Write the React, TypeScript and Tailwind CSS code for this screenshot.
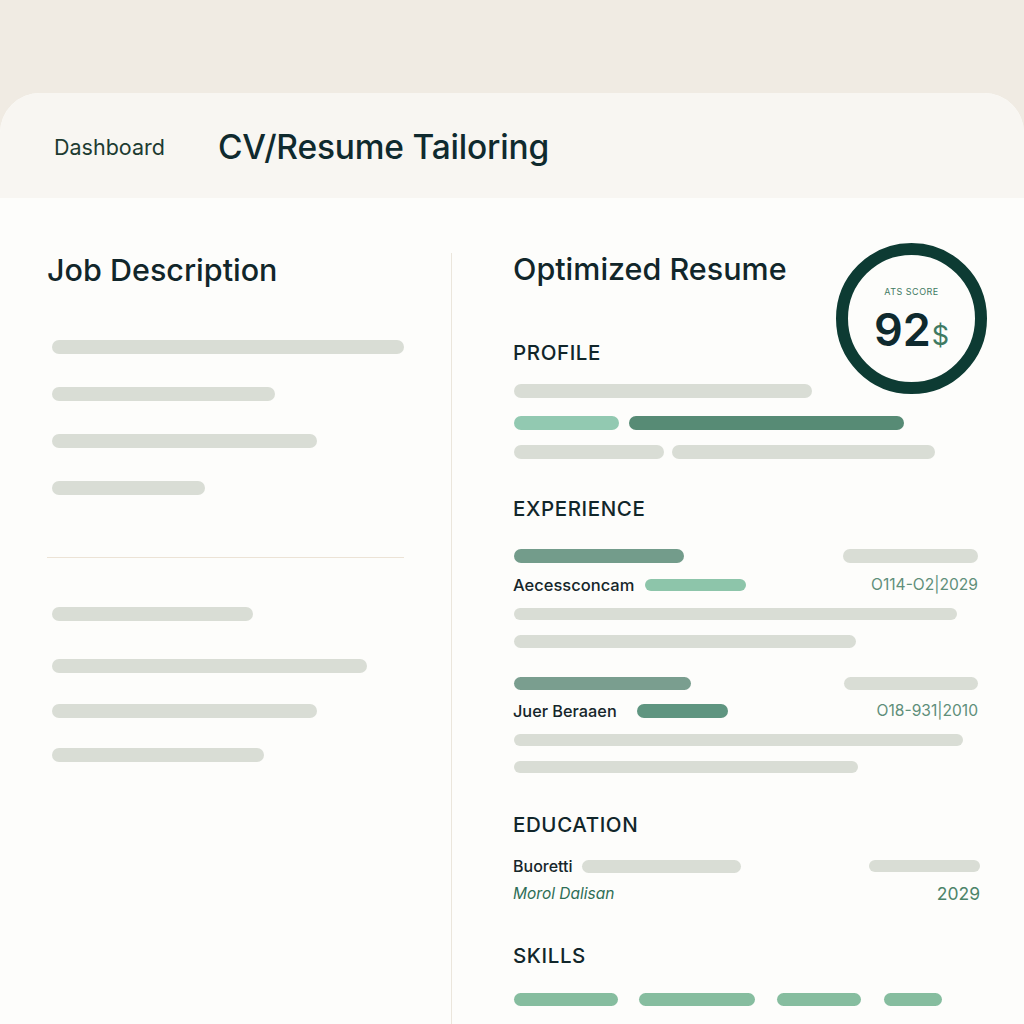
import React from 'react';

const gray = 'bg-[#d9ddd5]';

function Bar({ w, color = gray, className = '' }: { w: string; color?: string; className?: string }) {
  return <div className={`h-[14px] rounded-full ${color} ${w} ${className}`} />;
}

export default function App() {
  return (
    <div className="min-h-[1024px] w-[1024px] overflow-hidden bg-[#f0ebe3] pt-[93px] font-['Inter',sans-serif]">
      <div className="rounded-t-[40px] bg-[#fdfdfb] h-[931px] overflow-hidden">
        {/* Header */}
        <div className="h-[105px] bg-[#f8f6f2] flex items-center pl-[54px] pt-[4px]">
          <span className="text-[21.5px] text-[#1d3b31]">Dashboard</span>
          <span className="ml-[53px] text-[33.5px] font-medium text-[#0f2a2e] tracking-[-0.2px]">CV/Resume Tailoring</span>
        </div>

        <div className="flex">
          {/* Left column */}
          <div className="w-[451px] pl-[47px] pr-[46px] pt-[54px]">
            <h2 className="text-[30.5px] leading-[36px] font-medium text-[#11262a]">Job Description</h2>
            <div className="pl-[5px] mt-[52px] flex flex-col gap-[33px]">
              <Bar w="w-[352px]" />
              <Bar w="w-[223px]" />
              <Bar w="w-[265px]" />
              <Bar w="w-[153px]" />
            </div>
            <div className="mt-[62px] h-px bg-[#ece3d6] w-[357px]" />
            <div className="pl-[5px] mt-[49px] flex flex-col">
              <Bar w="w-[201px]" />
              <Bar w="w-[315px]" className="mt-[38px]" />
              <Bar w="w-[265px]" className="mt-[31px]" />
              <Bar w="w-[212px]" className="mt-[30px]" />
            </div>
          </div>

          {/* Divider */}
          <div className="w-px bg-[#ebe6dc] mt-[55px] h-[780px]" />

          {/* Right column */}
          <div className="relative flex-1 pl-[62px] pr-[44px] pt-[53px]">
            <h2 className="text-[30.5px] leading-[36px] font-medium text-[#11262a] ml-[-1px]">Optimized Resume</h2>

            {/* Score ring */}
            <div className="absolute left-[384px] top-[45px] w-[151px] h-[151px] rounded-full border-[12px] border-[#0d3b33] bg-[#fdfdfb] flex flex-col items-center justify-center">
              <span className="text-[9px] leading-[10px] tracking-[0.5px] text-[#3f7a62] mt-[2px]">ATS SCORE</span>
              <div className="flex items-end mt-[10px]">
                <span className="text-[45px] leading-[45px] font-semibold text-[#0f2a2e]">92</span>
                <span className="text-[27px] leading-[32px] text-[#3f7a62] ml-[1px]">$</span>
              </div>
            </div>

            {/* Profile */}
            <h3 className="mt-[54px] text-[20.5px] leading-[24px] font-medium tracking-[0.6px] text-[#11262a] ml-[-1px]">PROFILE</h3>
            <Bar w="w-[298px]" className="mt-[19px]" />
            <div className="flex gap-[10px] mt-[18px]">
              <Bar w="w-[105px]" color="bg-[#92c9b1]" />
              <Bar w="w-[275px]" color="bg-[#578b75]" />
            </div>
            <div className="flex gap-[8px] mt-[15px]">
              <Bar w="w-[150px]" />
              <Bar w="w-[263px]" />
            </div>

            {/* Experience */}
            <h3 className="mt-[38px] text-[20.5px] leading-[24px] font-medium tracking-[0.6px] text-[#11262a] ml-[-1px]">EXPERIENCE</h3>
            <div className="flex justify-between mt-[28px] pr-[2px]">
              <Bar w="w-[170px]" color="bg-[#739c8b]" />
              <Bar w="w-[135px]" />
            </div>
            <div className="flex items-center mt-[12px] h-[20px]">
              <span className="text-[16.5px] font-medium text-[#16262a] ml-[-1px]">Aecessconcam</span>
              <Bar w="w-[101px]" color="bg-[#8dc5aa]" className="ml-[11px] !h-[12px]" />
              <span className="ml-auto text-[15.6px] text-[#5f8f7a] pr-[2px]">O114-O2|2029</span>
            </div>
            <Bar w="w-[443px]" className="mt-[13px] !h-[12px]" />
            <Bar w="w-[342px]" className="mt-[15px] !h-[13px]" />

            <div className="flex justify-between mt-[29px] pr-[2px]">
              <Bar w="w-[177px]" color="bg-[#7a9e8f]" className="!h-[13px]" />
              <Bar w="w-[134px]" className="!h-[13px]" />
            </div>
            <div className="flex items-center mt-[11px] h-[20px]">
              <span className="text-[16.3px] font-medium text-[#16262a] ml-[-1px]">Juer Beraaen</span>
              <Bar w="w-[91px]" color="bg-[#5f9580]" className="ml-[20px]" />
              <span className="ml-auto text-[15.6px] text-[#5f8f7a] pr-[2px]">O18-931|2010</span>
            </div>
            <Bar w="w-[449px]" className="mt-[13px] !h-[12px]" />
            <Bar w="w-[344px]" className="mt-[15px] !h-[12px]" />

            {/* Education */}
            <h3 className="mt-[40px] text-[20.5px] leading-[24px] font-medium tracking-[0.6px] text-[#11262a] ml-[-1px]">EDUCATION</h3>
            <div className="flex items-center mt-[19px] h-[20px]">
              <span className="text-[16px] font-medium text-[#16262a] ml-[-1px]">Buoretti</span>
              <Bar w="w-[159px]" className="ml-[9px] !h-[13px]" />
              <Bar w="w-[111px]" className="ml-auto !h-[12px]" />
            </div>
            <div className="flex items-center mt-[8px] h-[20px]">
              <span className="text-[15.5px] italic text-[#2f6e56] ml-[-1px]">Morol Dalisan</span>
              <span className="ml-auto text-[17.5px] text-[#4c8469]">2029</span>
            </div>

            {/* Skills */}
            <h3 className="mt-[40px] text-[20.5px] leading-[24px] font-medium tracking-[0.6px] text-[#11262a] ml-[-1px]">SKILLS</h3>
            <div className="flex mt-[25px]">
              <Bar w="w-[104px]" color="bg-[#86bd9f]" className="!h-[13px]" />
              <Bar w="w-[116px]" color="bg-[#86bd9f]" className="ml-[21px] !h-[13px]" />
              <Bar w="w-[84px]" color="bg-[#86bd9f]" className="ml-[22px] !h-[13px]" />
              <Bar w="w-[58px]" color="bg-[#86bd9f]" className="ml-[23px] !h-[13px]" />
            </div>
          </div>
        </div>
      </div>
    </div>
  );
}
